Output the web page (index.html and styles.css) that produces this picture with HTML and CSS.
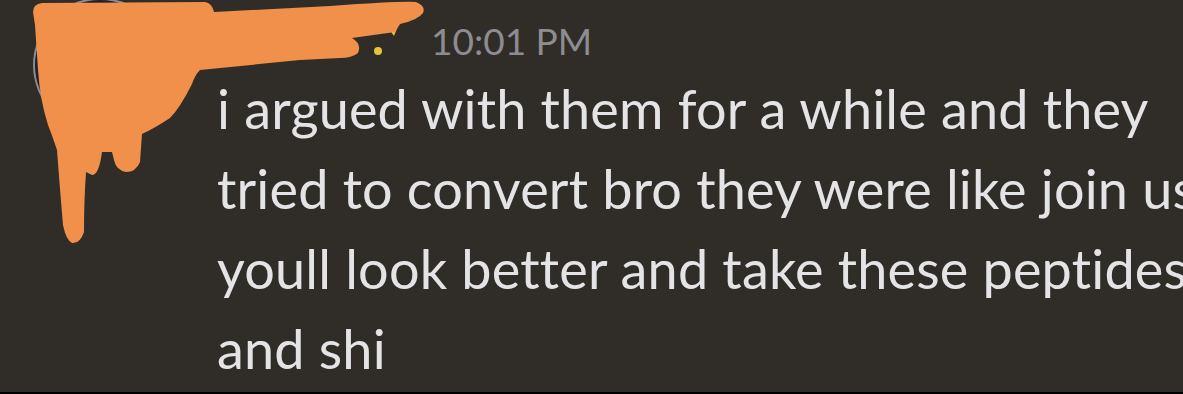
FILE: index.html
```html
<!DOCTYPE html>
<html>
<head>
<meta charset="utf-8">
<link rel="stylesheet" href="styles.css">
</head>
<body>
<div class="page">
  <div class="message">
    <div class="avatar"></div>
    <div class="content">
      <div class="header">
        <span class="name"></span>
        <span class="time">10:01 PM</span>
      </div>
      <div class="text">i argued with them for a while and they tried to convert bro they were like join us youll look better and take these peptides and shi</div>
    </div>
  </div>
  <svg class="scribble" width="1183" height="394" viewBox="0 0 1183 394">
    <circle cx="378" cy="51" r="4" fill="#e8c23a"/>
    <path d="M389 29 L398 26 L394 36 Z" fill="#e8c23a"/>
    <path d="M33 12 Q33 4 42 3 L205 2 Q212 3 214 12 L330 6 Q400 1 416 2 Q426 6 423 13 Q418 20 400 24 L395 32 L352 38 Q362 44 358 53 Q352 58 340 58 L300 60 L200 70 Q195 75 192 84 Q180 108 170 118 Q155 128 142 134 L140 162 Q136 172 126 172 Q116 170 114 160 L112 152 L102 152 Q99 175 92 175 L86 172 Q84 200 84 232 Q80 244 72 243 Q66 240 63 225 Q60 190 57 150 Q52 135 48 125 Q40 100 38 70 L35 25 Z" fill="#f0904a"/>
  </svg>
</div>
</body>
</html>
```
FILE: styles.css
```css
html, body {
  margin: 0;
  padding: 0;
}
body {
  background: #000;
  width: 1183px;
  height: 394px;
  overflow: hidden;
}
.page {
  position: relative;
  width: 1183px;
  height: 392px;
  background: #302d28;
  overflow: hidden;
}
.message {
  display: flex;
  gap: 50px;
  padding-left: 33px;
}
.avatar {
  flex: none;
  width: 134px;
  height: 134px;
  margin-top: -2px;
  border-radius: 50%;
  background: #1f1f24;
  box-shadow: inset 0 0 0 2px #8a8d96;
}
.content {
  flex: 1;
  min-width: 0;
  padding-top: 19px;
}
.header {
  display: flex;
  align-items: baseline;
  height: 44px;
  gap: 12px;
}
.name {
  display: inline-block;
  width: 202px;
}
.time {
  font-family: Lato, "Noto Sans", sans-serif;
  font-size: 37px;
  line-height: 44px;
  color: #8d8c90;
}
.text {
  margin-top: 6px;
  font-family: Lato, "Noto Sans", sans-serif;
  font-size: 54px;
  line-height: 80px;
  letter-spacing: 0.18px;
  color: #e4e3e6;
  font-variant-ligatures: none;
  font-feature-settings: "liga" 0, "clig" 0, "dlig" 0;
  width: 1000px;
}
.scribble {
  position: absolute;
  left: 0;
  top: 0;
  pointer-events: none;
}
```
